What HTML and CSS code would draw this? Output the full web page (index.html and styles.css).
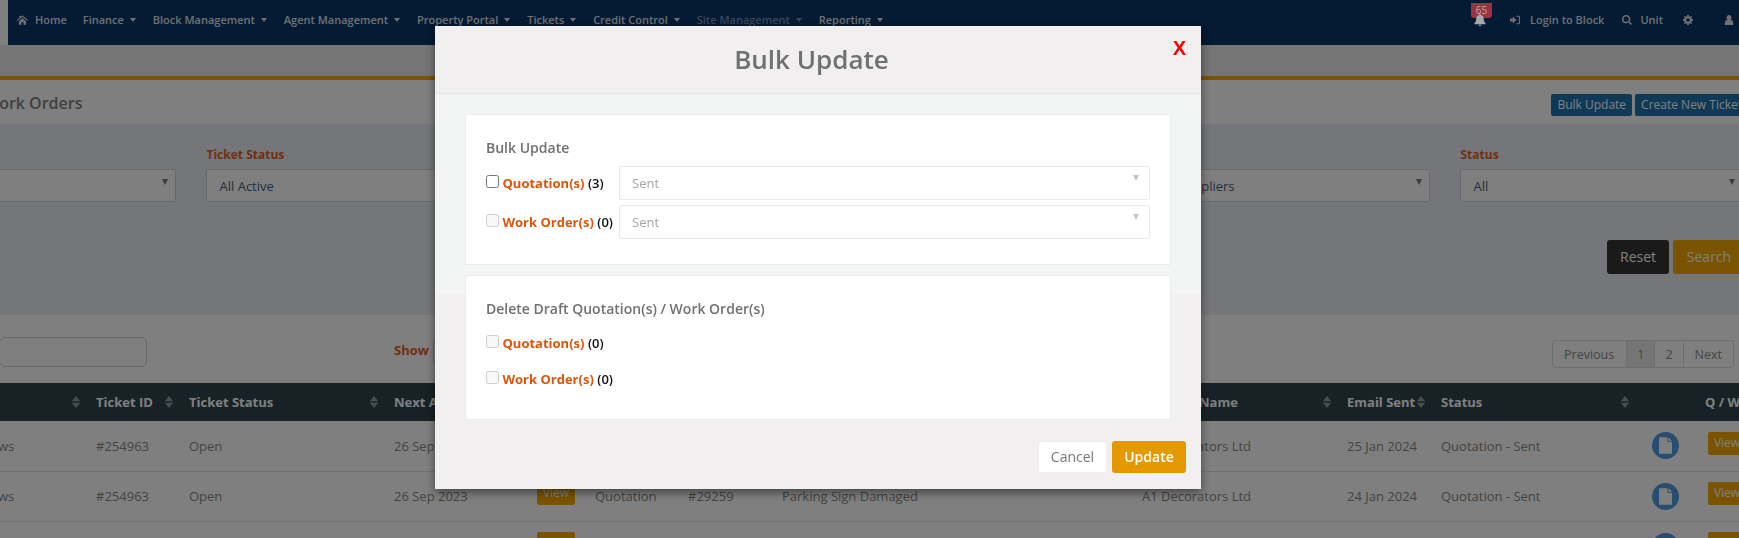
FILE: index.html
```html
<!DOCTYPE html>
<html lang="en">
<head>
    <meta charset="UTF-8">
    <title>Work Orders</title>
    <link rel="stylesheet" href="styles.css">
</head>
<body>
    <svg class="svg-defs" width="0" height="0">
        <symbol id="sort" viewBox="0 0 10 14"><path d="M5 0l5 6H0zM5 14L0 8h10z"/></symbol>
        <symbol id="doc" viewBox="0 0 14 18"><path d="M1 0h8v5h5v13H0V1zM10 0l4 4h-4z"/></symbol>
    </svg>

    <nav class="topnav">
        <a class="nav-home">
            <svg class="nav-icon" viewBox="0 0 14 12"><path d="M7 0l7 6-1 1-6-5-6 5-1-1 3-2.600V1h2v.8zM2.500 7.500L7 3.600l4.500 3.900V12H8.300V8.500H5.700V12H2.500z"/></svg>
            Home
        </a>
        <a>Finance <span class="caret"></span></a>
        <a>Block Management <span class="caret"></span></a>
        <a>Agent Management <span class="caret"></span></a>
        <a>Property Portal <span class="caret"></span></a>
        <a>Tickets <span class="caret"></span></a>
        <a>Credit Control <span class="caret"></span></a>
        <a class="nav-disabled">Site Management <span class="caret"></span></a>
        <a>Reporting <span class="caret"></span></a>

        <div class="nav-right">
            <a class="nav-bell">
                <span class="badge">65</span>
                <svg class="nav-icon" viewBox="0 0 12 13"><path d="M6 0a1 1 0 0 1 1 1.100C9 1.600 10 3.200 10 5c0 3 1 4 2 5v1H0v-1c1-1 2-2 2-5 0-1.800 1-3.400 3-3.900A1 1 0 0 1 6 0zM4.500 11.700h3a1.500 1.300 0 0 1-3 0z"/></svg>
            </a>
            <a class="nav-login">
                <svg class="nav-icon" viewBox="0 0 14 12"><path d="M0 4h4V1l5 5-5 5V8H0zM9 0h3a2 2 0 0 1 2 2v8a2 2 0 0 1-2 2H9v-1.500h3a.5.5 0 0 0 .5-.5V2a.5.5 0 0 0-.5-.5H9z"/></svg>
                Login to Block
            </a>
            <a class="nav-unit">
                <svg class="nav-icon" viewBox="0 0 12 12"><path fill-rule="evenodd" d="M5 0a5 5 0 0 1 4 8l3 2.600-1.400 1.400L7.800 9A5 5 0 1 1 5 0zm0 1.800a3.200 3.200 0 1 0 0 6.400 3.200 3.200 0 0 0 0-6.400z"/></svg>
                Unit
            </a>
            <a class="nav-cog">
                <svg class="nav-icon" viewBox="0 0 12 12"><path fill-rule="evenodd" d="M5 0h2l.3 1.600 1.100.5L9.800 1.200l1.100 1.100-.9 1.400.5 1.100 1.500.2v2l-1.500.3-.5 1.100.9 1.300-1.100 1.100-1.400-.9-1.100.5L7 12H5l-.3-1.600-1.100-.5-1.400.9-1.100-1.100.9-1.300-.5-1.100L0 7V5l1.500-.2.5-1.100-.9-1.400 1.100-1.100 1.400.9 1.100-.5zM6 4a2 2 0 1 0 0 4 2 2 0 0 0 0-4z"/></svg>
            </a>
            <a class="nav-user">
                <svg class="nav-icon" viewBox="0 0 12 12"><path d="M6 0a3 3 0 0 1 1.800 5.400C10 6 11 7.500 11 10v2H1v-2c0-2.500 1-4 3.200-4.600A3 3 0 0 1 6 0z"/></svg>
            </a>
        </div>
    </nav>

    <div class="top-band"></div>

    <div class="title-bar">
        <h1>Work Orders</h1>
        <div class="title-actions">
            <a class="btn-small">Bulk Update</a>
            <a class="btn-small">Create New Ticket</a>
        </div>
    </div>

    <div class="filters">
        <div class="filter-grid">
            <div class="filter"><label>Block</label><div class="fake-select"></div></div>
            <div class="filter"><label>Ticket Status</label><div class="fake-select">All Active</div></div>
            <div class="filter"><label>Type</label><div class="fake-select">All</div></div>
            <div class="filter"><label>Category</label><div class="fake-select">All</div></div>
            <div class="filter"><label>Supplier</label><div class="fake-select">All Suppliers</div></div>
            <div class="filter"><label>Status</label><div class="fake-select">All</div></div>
        </div>
        <div class="filter-actions">
            <a class="btn btn-reset">Reset</a>
            <a class="btn btn-search">Search</a>
        </div>
    </div>

    <div class="table-tools">
        <input class="table-search" type="text">
        <div class="show-entries"><b>Show</b><span class="show-box"></span></div>
        <div class="pagination">
            <a>Previous</a>
            <a class="current">1</a>
            <a>2</a>
            <a>Next</a>
        </div>
    </div>

    <table class="orders">
        <colgroup>
            <col class="c-block"><col class="c-id"><col class="c-status"><col class="c-next"><col class="c-view">
            <col class="c-type"><col class="c-ref"><col class="c-subject"><col class="c-supplier"><col class="c-sent">
            <col class="c-qstatus"><col class="c-doc"><col class="c-qw">
        </colgroup>
        <thead>
            <tr>
                <th><div class="th-in">Block<svg class="sort"><use href="#sort"/></svg></div></th>
                <th><div class="th-in">Ticket ID<svg class="sort"><use href="#sort"/></svg></div></th>
                <th><div class="th-in">Ticket Status<svg class="sort"><use href="#sort"/></svg></div></th>
                <th><div class="th-in">Next Action</div></th>
                <th></th>
                <th>Type</th>
                <th>Q / WO</th>
                <th>Subject</th>
                <th><div class="th-in">Supplier Name<svg class="sort"><use href="#sort"/></svg></div></th>
                <th><div class="th-in">Email Sent<svg class="sort"><use href="#sort"/></svg></div></th>
                <th><div class="th-in">Status<svg class="sort"><use href="#sort"/></svg></div></th>
                <th></th>
                <th class="th-qw">Q / WO</th>
            </tr>
        </thead>
        <tbody>
            <tr>
                <td>Park Views</td>
                <td>#254963</td>
                <td>Open</td>
                <td>26 Sep 2023</td>
                <td><a class="btn-view">View</a></td>
                <td>Quotation</td>
                <td>#29260</td>
                <td>Parking Sign Damaged</td>
                <td>A1 Decorators Ltd</td>
                <td>25 Jan 2024</td>
                <td>Quotation - Sent</td>
                <td><span class="doc-circle"><svg><use href="#doc"/></svg></span></td>
                <td><a class="btn-view">View</a></td>
            </tr>
            <tr>
                <td>Park Views</td>
                <td>#254963</td>
                <td>Open</td>
                <td>26 Sep 2023</td>
                <td><a class="btn-view">View</a></td>
                <td>Quotation</td>
                <td>#29259</td>
                <td>Parking Sign Damaged</td>
                <td>A1 Decorators Ltd</td>
                <td>24 Jan 2024</td>
                <td>Quotation - Sent</td>
                <td><span class="doc-circle"><svg><use href="#doc"/></svg></span></td>
                <td><a class="btn-view">View</a></td>
            </tr>
            <tr>
                <td>Park Views</td>
                <td>#254963</td>
                <td>Open</td>
                <td>26 Sep 2023</td>
                <td><a class="btn-view">View</a></td>
                <td>Quotation</td>
                <td>#29258</td>
                <td>Parking Sign Damaged</td>
                <td>A1 Decorators Ltd</td>
                <td>24 Jan 2024</td>
                <td>Quotation - Sent</td>
                <td><span class="doc-circle"><svg><use href="#doc"/></svg></span></td>
                <td><a class="btn-view">View</a></td>
            </tr>
        </tbody>
    </table>

    <!-- Bulk update modal -->
    <div class="overlay">
        <div class="modal">
            <div class="modal-header">
                <h2>Bulk Update</h2>
                <a class="modal-close">X</a>
            </div>
            <div class="modal-body">
                <div class="panel panel-update">
                    <h3>Bulk Update</h3>
                    <div class="update-row">
                        <label class="check"><input type="checkbox"><b>Quotation(s)</b> <i>(3)</i></label>
                        <div class="modal-select">Sent</div>
                    </div>
                    <div class="update-row">
                        <label class="check"><input type="checkbox" disabled><b>Work Order(s)</b> <i>(0)</i></label>
                        <div class="modal-select">Sent</div>
                    </div>
                </div>
                <div class="panel panel-delete">
                    <h3>Delete Draft Quotation(s) / Work Order(s)</h3>
                    <label class="check"><input type="checkbox" disabled><b>Quotation(s)</b> <i>(0)</i></label>
                    <label class="check"><input type="checkbox" disabled><b>Work Order(s)</b> <i>(0)</i></label>
                </div>
            </div>
            <div class="modal-footer">
                <a class="btn btn-cancel">Cancel</a>
                <a class="btn btn-update">Update</a>
            </div>
        </div>
    </div>
</body>
</html>
```

FILE: styles.css
```css
* {
    margin: 0;
    padding: 0;
    box-sizing: border-box;
    font-family: "Open Sans", "Noto Sans", sans-serif;
}

html, body {
    width: 1739px;
    height: 538px;
    overflow: hidden;
}

body {
    background-color: #fff;
    color: #888;
    font-size: 13px;
}

.svg-defs {
    display: block;
    height: 0;
}

/* top navigation */
.topnav {
    height: 45px;
    margin-left: 8px;
    padding: 11px 0 0 9px;
    background-color: #0a3566;
    display: flex;
    align-items: flex-start;
    gap: 17px;
    color: #dde1e6;
    font-size: 11px;
    font-weight: 600;
    line-height: 18px;
    white-space: nowrap;
}

.nav-home {
    display: flex;
    align-items: center;
    gap: 7px;
    margin-right: -1px;
}

.nav-icon {
    width: 10px;
    height: 10px;
    fill: #dde1e6;
    flex: none;
}

.nav-home .nav-icon {
    width: 11px;
}

.caret {
    display: inline-block;
    margin-left: 3px;
    vertical-align: 2px;
    border-top: 4px solid #dde1e6;
    border-left: 3.5px solid transparent;
    border-right: 3.5px solid transparent;
}

.nav-disabled {
    color: #7090b4;
}

.nav-disabled .caret {
    border-top-color: #7090b4;
}

.nav-right {
    margin-left: auto;
    display: flex;
    align-items: center;
    height: 18px;
}

.nav-right a {
    display: flex;
    align-items: center;
    gap: 8px;
}

/* the badge and bell sit above the overlay in the original */
.nav-bell {
    position: relative;
    z-index: 2;
    margin-right: 26px;
}

.badge {
    position: absolute;
    left: -3px;
    top: -11px;
    width: 21px;
    height: 15px;
    background-color: #9c3340;
    border-radius: 0 0 3px 3px;
    color: #c9a5a8;
    font-size: 10px;
    font-weight: 400;
    line-height: 15px;
    text-align: center;
}

.nav-bell .nav-icon {
    width: 12px;
    height: 12px;
    position: relative;
    fill: #a4a8ad;
}

.nav-login {
    margin-right: 18px;
    margin-left: -2px;
}

.nav-right .nav-login {
    gap: 10px;
}

.nav-unit {
    margin-right: 20px;
}

.nav-cog {
    margin-right: 31px;
}

.nav-user {
    margin-right: 5px;
}

.top-band {
    height: 31px;
    background-color: #ebebeb;
}

/* page title */
.title-bar {
    height: 48px;
    margin-left: -16px;
    border-top: 4px solid #f4a800;
    padding-top: 12px;
    display: flex;
    justify-content: space-between;
    align-items: flex-start;
}

.title-bar h1 {
    font-size: 16px;
    font-weight: 600;
    line-height: 22px;
    color: #808080;
}

.title-actions {
    display: flex;
    gap: 3px;
    margin-right: -9px;
    margin-top: 2px;
}

.btn-small {
    height: 22px;
    padding: 0 6px;
    background-color: #1c74b0;
    border-radius: 2px;
    color: #fff;
    font-size: 12px;
    line-height: 22px;
}

/* filter panel */
.filters {
    height: 191px;
    padding-top: 20px;
    background-color: #ebedf5;
    margin-left: -107px;
    width: 1860px;
}

.filter-grid {
    display: grid;
    grid-template-columns: repeat(6, 282.500px);
    column-gap: 31px;
}

.filter label {
    display: block;
    height: 25px;
    color: #e0601a;
    font-size: 12px;
    font-weight: 700;
    line-height: 22px;
}

.fake-select {
    position: relative;
    height: 33px;
    margin-left: -1px;
    padding-left: 13px;
    background-color: #fff;
    border: 1px solid #ced2dc;
    border-radius: 2px;
    color: #3f5f7f;
    font-size: 13px;
    line-height: 33px;
}

.fake-select::after {
    content: "";
    position: absolute;
    right: 7px;
    top: 9px;
    border-top: 6px solid #777;
    border-left: 3.500px solid transparent;
    border-right: 3.500px solid transparent;
}

.filter-actions {
    display: flex;
    gap: 4px;
    margin: 38px 0 0 1714px;
}

.btn {
    display: block;
    border-radius: 3px;
    font-size: 14px;
    text-align: center;
}

.btn-reset {
    width: 62px;
    height: 34px;
    line-height: 34px;
    background-color: #343434;
    color: #fff;
}

.btn-search {
    width: 72px;
    height: 34px;
    line-height: 34px;
    background-color: #f4a800;
    color: #fff;
}

/* table tools */
.table-tools {
    height: 68px;
    padding-top: 22px;
    display: flex;
    align-items: flex-start;
    position: relative;
}

.table-search {
    width: 148px;
    height: 30px;
    margin-left: -1px;
    border: 1px solid #c8d0dc;
    border-radius: 6px;
    background: #fff;
}

.show-entries {
    margin-left: 247px;
    display: flex;
    align-items: flex-start;
    gap: 4px;
    line-height: 26px;
    color: #e0601a;
    font-size: 13px;
}

.show-box {
    width: 60px;
    height: 30px;
    border: 1px solid #c8d0dc;
    border-radius: 6px;
}

.pagination {
    margin-left: auto;
    margin-right: 5px;
    margin-top: 3px;
    display: flex;
    height: 28px;
    border: 1px solid #ddd;
    border-radius: 3px;
    font-size: 12.500px;
    line-height: 28px;
    color: #888;
}

.pagination a {
    padding: 0 10px;
    border-left: 1px solid #ddd;
}

.pagination a:first-child {
    padding: 0 12px 0 11px;
    border-left: none;
}

.pagination a:last-child {
    padding: 0 11px;
}

.pagination .current {
    background-color: #ebebeb;
}

/* table */
.orders {
    table-layout: fixed;
    width: 1861px;
    margin-left: -61px;
    border-collapse: collapse;
}

.c-block { width: 147px; }
.c-id { width: 93px; }
.c-status { width: 205px; }
.c-next { width: 142px; }
.c-view { width: 59px; }
.c-type { width: 93px; }
.c-ref { width: 94px; }
.c-subject { width: 360px; }
.c-supplier { width: 205px; }
.c-sent { width: 94px; }
.c-qstatus { width: 204px; }
.c-doc { width: 62px; }
.c-qw { width: 103px; }

.orders th {
    height: 38px;
    padding: 0 5px 0 10px;
    background-color: #30444c;
    color: #fff;
    font-size: 13px;
    font-weight: 700;
    text-align: left;
    white-space: nowrap;
}

.orders .th-qw {
    padding-left: 8px;
}

.th-in {
    display: flex;
    justify-content: space-between;
    align-items: center;
}

.sort {
    width: 10px;
    height: 12px;
    fill: #8e9aa0;
    flex: none;
}

.orders td {
    height: 50px;
    padding: 0 10px;
    border-bottom: 1px solid #dfe2e8;
    background-color: #fff;
    color: #888;
    font-size: 13px;
    white-space: nowrap;
}

.btn-view {
    display: block;
    width: 38px;
    height: 23px;
    margin-top: -5px;
    margin-left: 1px;
    background-color: #f4a800;
    border-radius: 2px;
    color: #fff;
    font-size: 12px;
    line-height: 21px;
    text-align: center;
}

.doc-circle {
    display: flex;
    align-items: center;
    justify-content: center;
    width: 27px;
    height: 27px;
    margin-left: 7px;
    border-radius: 50%;
    background-color: #4f9ae0;
}

.doc-circle svg {
    width: 13px;
    height: 17px;
    fill: #fff;
}

/* modal */
.overlay {
    position: fixed;
    top: 0;
    left: 0;
    width: 100%;
    height: 100%;
    padding-top: 26px;
    background-color: rgba(0, 0, 0, 0.5);
}

.modal {
    width: 766px;
    margin-left: 435px;
    background-color: #f1eff0;
    box-shadow: 0 3px 9px rgba(0, 0, 0, 0.5);
}

.modal-header {
    position: relative;
    height: 68px;
    padding-right: 13px;
    border-bottom: 1px solid #e5e5e5;
    text-align: center;
}

.modal-header h2 {
    font-size: 26px;
    font-weight: 600;
    line-height: 66px;
    color: #707070;
}

.modal-close {
    position: absolute;
    right: 15px;
    top: 10px;
    font-family: "Liberation Sans", sans-serif;
    font-size: 20px;
    font-weight: 700;
    line-height: 24px;
    color: #f00;
}

.modal-body {
    height: 200px;
    padding: 20px 30px 0;
    background-color: #f3f5f4;
}

.panel {
    background-color: #fff;
    border: 1px solid #e9edf0;
    padding: 0 20px;
}

.panel h3 {
    font-size: 14px;
    font-weight: 600;
    line-height: 20px;
    color: #707070;
}

.panel-update {
    height: 151px;
    padding-top: 23px;
}

.panel-update h3 {
    margin-bottom: 8px;
}

.update-row {
    display: grid;
    grid-template-columns: 133px 1fr;
    align-items: center;
    margin-bottom: 5px;
}

.panel-delete {
    height: 145px;
    margin-top: 10px;
    padding-top: 23px;
}

.panel-delete h3 {
    margin-bottom: 14px;
}

.panel-delete .check {
    margin-bottom: 16px;
}

.check {
    display: flex;
    align-items: center;
    height: 20px;
    font-size: 13px;
    white-space: nowrap;
}

.check input {
    width: 13px;
    height: 13px;
    margin: -3px 3.500px 0 0;
    flex: none;
}

.check b {
    color: #d9570a;
    font-weight: 700;
}

.check i {
    margin-left: 3.500px;
    color: #111;
    font-style: normal;
    font-weight: 600;
}

.modal-select {
    position: relative;
    height: 34px;
    padding-left: 12px;
    border: 1px solid #e6ebf0;
    border-radius: 2px;
    background-color: #fff;
    color: #a5a5a5;
    font-size: 13px;
    line-height: 32px;
}

.modal-select::after {
    content: "";
    position: absolute;
    right: 10px;
    top: 8px;
    border-top: 6px solid #c4c4c4;
    border-left: 3px solid transparent;
    border-right: 3px solid transparent;
}

.modal-footer {
    display: flex;
    justify-content: flex-end;
    gap: 5px;
    padding: 147px 15px 16px 0;
}

.btn-cancel {
    width: 69px;
    height: 32px;
    background-color: #fff;
    border: 1px solid #eee;
    color: #777;
    line-height: 30px;
}

.btn-update {
    width: 74px;
    height: 32px;
    line-height: 32px;
    background-color: #e59900;
    color: #fff;
    font-weight: 600;
}
```
